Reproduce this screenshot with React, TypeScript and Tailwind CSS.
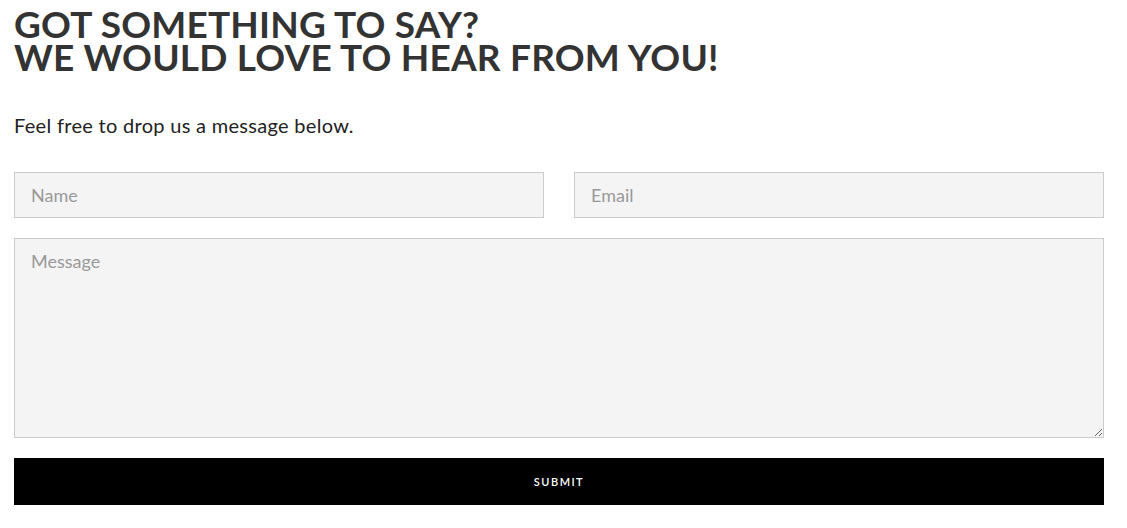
export default function App() {
  return (
    <div className="min-h-screen bg-white pl-[14px] pr-[23px] pt-[7px] font-['Lato','Open_Sans',sans-serif] text-[#333]">
      <h1 className="text-[37px] font-bold uppercase leading-[33px] tracking-[0.2px]">
        Got something to say?
        <br />
        We would love to hear from you!
      </h1>
      <p className="mt-[40px] text-[20px] leading-[24px] tracking-[0.3px] text-[#222]">
        Feel free to drop us a message below.
      </p>
      <form className="mt-[35px] flex flex-col gap-5">
        <div className="grid grid-cols-2 gap-[30px]">
          <input
            type="text"
            placeholder="Name"
            className="h-[46px] border border-[#ccc] bg-[#f4f4f4] px-4 text-[18px] placeholder:text-[#999] outline-none"
          />
          <input
            type="email"
            placeholder="Email"
            className="h-[46px] border border-[#ccc] bg-[#f4f4f4] px-4 text-[18px] placeholder:text-[#999] outline-none"
          />
        </div>
        <textarea
          placeholder="Message"
          className="h-[200px] border border-[#ccc] bg-[#f4f4f4] px-4 py-[9px] text-[18px] placeholder:text-[#999] outline-none"
        />
        <button
          type="button"
          className="h-[47px] bg-black pt-px text-[11px] font-semibold uppercase tracking-[1.5px] text-white"
        >
          Submit
        </button>
      </form>
    </div>
  );
}
